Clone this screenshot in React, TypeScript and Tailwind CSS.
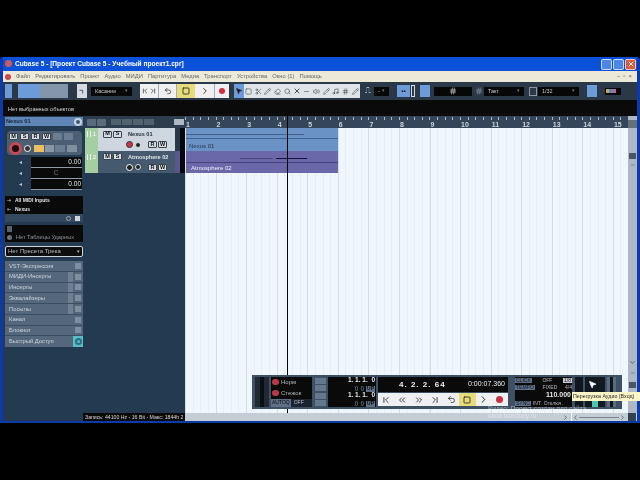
import React from 'react';
import { ChevronDown, ChevronFirst, ChevronLast, ChevronLeft, ChevronRight, ChevronsLeft, ChevronsRight, Square, MousePointer2, Search, X, Pencil, Scissors, Eraser, Volume2, Hash, Minus, Music, Undo2 } from 'lucide-react';

const menu = ['Файл', 'Редактировать', 'Проект', 'Аудио', 'МИДИ', 'Партитура', 'Медиа', 'Транспорт', 'Устройства', 'Окно (1)', 'Помощь'];
const sections = ['VST-Экспрессия', 'МИДИ-Инсерты', 'Инсерты', 'Эквалайзеры', 'Посылы', 'Канал', 'Блокнот'];
const bars = Array.from({ length: 15 }, (_, i) => i + 1);

const Mini: React.FC<{ label?: string; className?: string }> = ({ label, className = 'border border-[#39434e] bg-[#d6dce2] text-[#111]' }) => (
  <span className={`flex h-[7px] w-[9px] items-center justify-center rounded-[1px] text-[5.5px] font-bold leading-none ${className}`}>{label}</span>
);

const Drop: React.FC<{ width: string; text?: string }> = ({ width, text }) => (
  <div className={`flex h-[9px] items-center justify-between bg-[#070707] px-[4px] text-[5.5px] text-[#c8c8c8] ${width}`}>
    <span>{text}</span>
    <span className="text-[5px] text-[#777]">▾</span>
  </div>
);

const TrackRow: React.FC<{ n: number; name: string; selected?: boolean }> = ({ n, name, selected }) => (
  <div className="flex h-[22.5px]">
    <div className="flex w-[13px] justify-between bg-[#a5cfa3] px-[2px] pt-[2px] text-[6px] text-white">
      <span className="mt-[1px] h-[6px] w-[4px] border-x border-white/80" />
      <span>{n}</span>
    </div>
    <div className={`flex w-[77px] flex-col gap-[3px] pl-[5px] pt-[2px] ${selected ? 'bg-[#ced7e0]' : 'bg-[#45596f]'}`}>
      <div className="flex items-center gap-[1px]">
        <Mini label="M" />
        <Mini label="S" />
        <span className={`ml-[5px] truncate text-[5.6px] font-bold ${selected ? 'text-[#24303c]' : 'text-[#dfe4e9]'}`}>{name}</span>
      </div>
      <div className="flex items-center pl-[23px]">
        <span className={`h-[7px] w-[7px] rounded-full border ${selected ? 'border-[#333] bg-[#c8383e]' : 'border-white bg-[#222]'}`} />
        <span className="ml-[2px] h-[6px] w-[6px] rounded-full border border-[#ddd] bg-[#222]" />
        <span className="ml-[7px] flex gap-[1px]">
          <Mini label="R" />
          <Mini label="W" />
        </span>
      </div>
    </div>
    <div className={`w-[5px] ${selected ? 'bg-[#26384c]' : 'bg-[#5a5690]'}`} />
    <div className="w-[5px] bg-[#08080c]" />
  </div>
);

const Value: React.FC<{ text: string; center?: boolean }> = ({ text, center }) => (
  <div className="flex h-[11px] items-center">
    <span className="w-[26px] pl-[14px] text-[6px] text-[#b8c4d0]">◂</span>
    <div className={`flex h-full flex-1 items-center border-b border-[#8d9aa8] bg-[#0a0a0a] pr-[1px] text-[6.5px] ${center ? 'justify-center text-[#777]' : 'justify-end text-[#e8e8e8]'}`}>{text}</div>
  </div>
);

const Inspector: React.FC = () => (
  <div className="mr-[2px] flex w-[78px] flex-col pt-[1px]">
    <div className="flex h-[9px] items-center justify-between bg-[#5f86b6] pl-[1px] pr-[1px] text-[5.6px] font-bold text-[#16263a]">
      <span>Nexus 01</span>
      <span className="h-[8px] w-[8px] rounded-full border-2 border-[#c7d2dc] bg-[#42586e]" />
    </div>
    <div className="mt-[5px] ml-[2px] mr-[1px] h-[24px] rounded-[4px] bg-[#4b5e73] p-[2px]">
      <div className="flex gap-[2px]">
        <Mini label="M" />
        <Mini label="S" />
        <Mini label="R" />
        <Mini label="W" />
        <Mini className="bg-[#6b7d90]" />
        <Mini className="bg-[#6b7d90]" />
      </div>
      <div className="mt-[2px] flex items-center">
        <span className="h-[13px] w-[13px] rounded-full border-[3px] border-[#c94a50] bg-[#1a1012]" />
        <span className="ml-[2px] h-[7px] w-[7px] rounded-full border border-white bg-[#333]" />
        <span className="ml-[3px] h-[7px] w-[10px] bg-[#e8c060]" />
        <span className="ml-[1px] h-[7px] w-[9px] bg-[#8a98a6]" />
        <span className="ml-[1px] h-[7px] w-[10px] bg-[#6b7d90]" />
        <span className="ml-[2px] h-[7px] w-[10px] bg-[#7f8f9f]" />
      </div>
    </div>
    <div className="mt-[2px] pr-[1px]">
      <Value text="0.00" />
      <Value text="C" center />
      <Value text="0.00" />
    </div>
    <div className="mt-[6px] flex h-[9px] items-center gap-[4px] bg-[#0a0a0a] px-[2px] text-[5px] font-bold text-[#e0e0e0]">
      <span className="text-[#7d8a98]">⇥</span>
      <span>All MIDI Inputs</span>
    </div>
    <div className="flex h-[9px] items-center gap-[4px] bg-[#0a0a0a] px-[2px] text-[5px] font-bold text-[#e0e0e0]">
      <span className="text-[#7d8a98]">⇤</span>
      <span>Nexus</span>
    </div>
    <div className="flex h-[8px] items-center justify-end gap-[4px] bg-[#34485e] pr-[3px]">
      <span className="h-[5px] w-[5px] rounded-full border border-[#9aa6b2]" />
      <span className="h-[5px] w-[5px] bg-[#d0d6dc]" />
    </div>
    <div className="mt-[3px] h-[8px] bg-[#0a0a0a] px-[2px]">
      <span className="mt-[1px] block h-[6px] w-[5px] bg-[#56626e]" />
    </div>
    <div className="flex h-[9px] items-center gap-[4px] bg-[#0a0a0a] px-[2px] text-[5.6px] text-[#8d959d]">
      <span className="h-[5px] w-[5px] rounded-full bg-[#6a747e]" />
      <span>Нет Таблицы Ударных</span>
    </div>
    <div className="mt-[4px] flex h-[11px] items-center justify-between rounded-[2px] border border-[#cfd6dc] bg-[#0e0e0e] px-[2px] text-[6px] text-[#b8bec4]">
      <span>Нет Пресета Трека</span>
      <span className="text-[5px]">▾</span>
    </div>
    <div className="mt-[4px] flex flex-col">
      {sections.map((s, i) => (
        <div key={s} className="flex h-[10.75px] items-center justify-between border-b border-[#3b4f64] bg-[#55677d] pl-[4px] pr-[2px] text-[5.8px] text-[#ccd4db]">
          <span>{s}</span>
          <span className="flex h-full items-center gap-[2px]">
            {i > 0 && i < 5 && <span className="h-full w-[5px] bg-[#6f8093]" />}
            <span className="h-[6px] w-[6px] bg-[#7f8f9f]" />
          </span>
        </div>
      ))}
      <div className="flex h-[10.75px] items-center justify-between bg-[#55677d] pl-[4px] text-[5.8px] text-[#ccd4db]">
        <span>Быстрый Доступ</span>
        <span className="flex h-full w-[10px] items-center justify-center bg-[#58c0c4]">
          <span className="h-[7px] w-[7px] rounded-full border-2 border-[#2a6f88]" />
        </span>
      </div>
    </div>
  </div>
);

const Tool: React.FC<{ on?: boolean; children?: React.ReactNode }> = ({ on, children }) => (
  <span className={`flex h-[14px] w-[9.7px] items-center justify-center text-[#4a4f55] ${on ? 'bg-[#6d9ad8]' : 'bg-[#dfe4e9]'}`}>{children}</span>
);

const Toolbar: React.FC = () => (
  <div className="flex h-[18px] items-center bg-[#2b3848] pl-[2px]">
    <span className="h-[14px] w-[7px] bg-[#6d9ad8]" />
    <div className="ml-[6px] flex">
      <span className="h-[14px] w-[22px] bg-[#6d9ad8]" />
      <span className="h-[14px] w-[28px] bg-[#8496aa]" />
    </div>
    <span className="ml-[9px] flex h-[14px] w-[10px] items-center justify-center bg-[#d5dbe1] text-[#222]"><ChevronRight size={8} className="-rotate-45" /></span>
    <Drop width="ml-[4px] w-[41px]" text="Касание" />
    <div className="ml-[8px] flex h-[14px] w-[89px] items-stretch bg-[#eef0f2] text-[#222]">
      <span className="flex w-[18px] items-center justify-center"><ChevronFirst size={8} /><ChevronLast size={8} /></span>
      <span className="flex w-[19px] items-center justify-center border-x border-[#aab]"><Undo2 size={8} /></span>
      <span className="flex w-[18px] items-center justify-center bg-[#e8dc7a]"><Square size={8} strokeWidth={2.5} /></span>
      <span className="flex w-[19px] items-center justify-center"><ChevronRight size={10} /></span>
      <span className="flex w-[15px] items-center justify-center border-l border-[#aab]"><span className="h-[6px] w-[6px] rounded-full bg-[#d23040]" /></span>
    </div>
    <div className="ml-[5px] flex">
      <Tool on><MousePointer2 size={8} fill="#111" /></Tool>
      <Tool><Square size={7} /></Tool>
      <Tool><Scissors size={7} /></Tool>
      <Tool><Pencil size={7} /></Tool>
      <Tool><Eraser size={7} /></Tool>
      <Tool><Search size={7} /></Tool>
      <Tool><X size={8} strokeWidth={3} /></Tool>
      <Tool><Minus size={7} /></Tool>
      <Tool><Volume2 size={7} /></Tool>
      <Tool><Pencil size={7} /></Tool>
      <Tool><Music size={7} /></Tool>
      <Tool><Hash size={7} /></Tool>
      <Tool><Pencil size={7} /></Tool>
    </div>
    <span className="ml-[5px] w-[8px] text-[8px] leading-none text-[#aab6c2]">⎍</span>
    <Drop width="ml-[1px] w-[15px]" text="-" />
    <span className="ml-[8px] flex h-[12px] w-[13px] items-center justify-center bg-[#6d9ad8] text-[6px] text-[#111]">▪▪</span>
    <span className="ml-[1px] h-[12px] w-[4px] border border-[#d5dbe1]" />
    <span className="ml-[5px] h-[12px] w-[10px] bg-[#6d9ad8]" />
    <div className="ml-[4px] flex h-[9px] w-[38px] items-center justify-center bg-[#070707] text-[#e0e0e0]"><Hash size={8} /></div>
    <span className="ml-[3px] text-[#8996a4]"><Hash size={8} /></span>
    <Drop width="ml-[1px] w-[40px]" text="Такт" />
    <span className="ml-[5px] h-[9px] w-[8px] border border-[#8996a4]" />
    <Drop width="ml-[1px] w-[41px]" text="1/32" />
    <span className="ml-[8px] h-[12px] w-[10px] bg-[#6d9ad8]" />
    <div className="ml-[8px] flex h-[7px] w-[16px] items-center bg-[#070707] px-[1px]">
      <span className="h-[4px] w-[10px] bg-[linear-gradient(90deg,#d9a23c_0_33%,#4f8fd0_33%_66%,#c85c8a_66%)]" />
    </div>
  </div>
);

const Ruler: React.FC = () => (
  <div className="relative flex h-[12px] bg-[#35465a] pl-[1px]">
    <div className="absolute inset-x-0 top-[1px] h-[3px] bg-[repeating-linear-gradient(90deg,#aeb8c2_0_1px,transparent_1px_7.64px)]" />
    {bars.map((b) => (
      <span key={b} className="w-[30.57px] shrink-0 pt-[4px] text-[7px] font-bold leading-[9px] text-[#ccd4dc]">{b}</span>
    ))}
  </div>
);

const Lcd: React.FC = () => (
  <div className="flex h-[15px] flex-col justify-between bg-[#0a0a0a] pr-[1px] text-[6.5px] font-bold leading-none text-[#e8e8e8]">
    <div className="text-right">1. 1. 1.&nbsp;&nbsp;0</div>
    <div className="flex justify-end gap-[2px] text-[#56616c]">
      <span>0</span>
      <span>0</span>
      <span className="bg-[#5d7087] px-[1px] text-[5px] text-[#0a0a0a]">UP</span>
    </div>
  </div>
);

const Transport: React.FC = () => (
  <div className="absolute left-[252px] top-[375px] flex h-[34px] w-[370px] gap-[2px] bg-[#3e5064] px-[3px] py-[2px]">
    <div className="flex w-[14px] justify-center gap-[1px] bg-[#1f2a36]">
      <span className="h-full w-[4px] bg-[#0b0f14]" />
    </div>
    <div className="flex w-[41px] flex-col gap-[1px] bg-[#0a0a0a] text-[6px] text-[#b4bac0]">
      <div className="flex h-[10px] items-center gap-[2px] px-[1px]"><span className="h-[6px] w-[7px] rounded-full bg-[#b83a44]" />Норм</div>
      <div className="flex h-[10px] items-center gap-[2px] px-[1px]"><span className="h-[6px] w-[7px] rounded-full bg-[#b83a44]" />Стежок</div>
      <div className="flex h-[8px] items-center gap-[3px] bg-[#1a2530] text-[5px]"><span className="bg-[#5d7087] px-[1px] text-[#0a0a0a]">AUTOQ</span>OFF</div>
    </div>
    <div className="ml-[1px] flex w-[11px] flex-col justify-between py-[1px]">
      <span className="h-[6px] bg-[#64778c]" />
      <span className="h-[6px] bg-[#64778c]" />
      <span className="h-[6px] bg-[#64778c]" />
      <span className="h-[6px] bg-[#64778c]" />
    </div>
    <div className="flex w-[48px] flex-col justify-between">
      <Lcd />
      <Lcd />
    </div>
    <div className="flex w-[130px] flex-col">
      <div className="flex h-[15px] items-center justify-between bg-[#0a0a0a] pl-[21px] pr-[3px] text-[8px] font-bold text-[#eceff2]">
        <span className="tracking-[1px]">4. 2. 2. 64</span>
        <span className="text-[7px] font-normal">0:00:07.360</span>
      </div>
      <div className="mt-[1px] flex h-[13px] bg-[#eef0f2] text-[#222]">
        <span className="flex flex-1 items-center justify-center"><ChevronFirst size={10} /></span>
        <span className="flex flex-1 items-center justify-center"><ChevronsLeft size={10} /></span>
        <span className="flex flex-1 items-center justify-center"><ChevronsRight size={10} /></span>
        <span className="flex flex-1 items-center justify-center"><ChevronLast size={10} /></span>
        <span className="flex flex-1 items-center justify-center"><Undo2 size={9} /></span>
        <span className="flex flex-1 items-center justify-center bg-[#e8dc7a]"><Square size={8} strokeWidth={2.5} /></span>
        <span className="flex flex-1 items-center justify-center"><ChevronRight size={11} /></span>
        <span className="flex flex-1 items-center justify-center"><span className="h-[7px] w-[7px] rounded-full bg-[#c93040]" /></span>
      </div>
    </div>
    <div className="ml-[5px] flex w-[57px] flex-col bg-[#0a0a0a] text-[5px] leading-none text-[#b4bac0]">
      <div className="flex h-[7px] items-center justify-between">
        <span className="bg-[#5d7087] px-[1px] text-[#10161c]">CLICK</span>
        <span>OFF</span>
        <span className="bg-[#c8ced4] px-[1px] text-[#111]">1/8</span>
      </div>
      <div className="flex h-[7px] items-center justify-between">
        <span className="bg-[#5d7087] px-[1px] text-[#10161c]">TEMPO</span>
        <span>FIXED</span>
        <span>4/4</span>
      </div>
      <div className="h-[8px] pr-[1px] text-right text-[7px] font-bold text-[#e8e8e8]">110.000</div>
      <div className="flex h-[8px] items-center gap-[2px]">
        <span className="bg-[#5d7087] px-[1px] text-[#10161c]">SYNC</span>
        <span>INT.</span>
        <span>Отключ.</span>
      </div>
    </div>
    <div className="ml-[1px] w-[8px] bg-[#10161c]" />
    <div className="flex w-[20px] flex-col justify-end bg-[#11181f]">
      <span className="mx-auto h-[6px] w-[6px] bg-[#48c9b0]" />
    </div>
    <div className="flex w-[9px] justify-center bg-[#5b6c80]">
      <span className="h-full w-[3px] bg-[#10161c]" />
    </div>
  </div>
);

const App: React.FC = () => {
  return (
    <div className="relative h-[480px] w-[640px] overflow-hidden bg-black pt-[57px] font-['Liberation_Sans',sans-serif] blur-[0.4px]">
      <div className="flex h-[366px] flex-col rounded-t-[3px] bg-[#0c3aa8] px-[3px] pb-[2px]">
        <div className="flex h-[14px] items-center justify-between bg-[#0a50d8] pr-[1px] text-[6.6px] font-bold text-white">
          <span className="flex items-center gap-[3px] pl-[2px]">
            <span className="h-[7px] w-[7px] rounded-full bg-[#d05a5a]" />
            Cubase 5 - [Проект Cubase 5 - Учебный проект1.cpr]
          </span>
          <span className="flex gap-[1px]">
            <span className="h-[11px] w-[11px] rounded-[2px] border border-white/70 bg-[#4c86e8]" />
            <span className="h-[11px] w-[11px] rounded-[2px] border border-white/70 bg-[#4c86e8]" />
            <span className="flex h-[11px] w-[11px] items-center justify-center rounded-[2px] border border-white/70 bg-[#d8583a]"><X size={8} strokeWidth={3} /></span>
          </span>
        </div>
        <div className="flex h-[11px] items-center justify-between bg-[#ece9d8] pr-[2px] text-[#666]">
          <div className="flex items-center gap-[5px] pl-[2px] text-[5.8px]">
            <span className="h-[6px] w-[6px] rounded-full bg-[#c84a4a]" />
            {menu.map((m) => <span key={m}>{m}</span>)}
          </div>
          <span className="text-[6px] tracking-[3px]">–▫×</span>
        </div>
        <Toolbar />
        <div className="flex h-[16px] items-start bg-[#0a0a0a] pl-[5px] pt-[5px] text-[5.6px] leading-[8px] text-[#d8d8d8]">Нет выбранных объектов</div>
        <div className="flex min-h-0 flex-1 bg-[#233a50]">
          <div className="flex w-[182px] flex-col pl-[2px]">
            <div className="flex flex-1">
              <Inspector />
              <div className="flex w-[100px] flex-col">
                <div className="flex h-[12px] items-center gap-[1px] bg-[#2e3d4e] pl-[2px]">
                  <Mini className="bg-[#5a6b7d]" />
                  <Mini className="bg-[#5a6b7d]" />
                  <span className="ml-[4px] h-[6px] w-[10px] bg-[#51626f]" />
                  <span className="h-[6px] w-[10px] bg-[#51626f]" />
                  <span className="h-[6px] w-[10px] bg-[#51626f]" />
                  <span className="h-[6px] w-[10px] bg-[#51626f]" />
                  <span className="ml-[19px] h-[6px] w-[10px] bg-[#aeb8c2]" />
                </div>
                <TrackRow n={1} name="Nexus 01" selected />
                <TrackRow n={2} name="Atmosphere 02" />
              </div>
            </div>
            <div className="flex h-[8px] justify-end">
              <span className="w-[102px] overflow-hidden whitespace-nowrap bg-[#0a0a0a] pl-[2px] text-[5.2px] leading-[8px] text-[#d8d8d8]">Запись: 44100 Hz - 16 Bit - Макс: 1844h 2</span>
            </div>
          </div>
          <div className="flex min-w-0 flex-1 flex-col">
            <div className="flex flex-1 overflow-hidden">
              <div className="flex min-w-0 flex-1 flex-col">
                <Ruler />
                <div className="flex-1 bg-[#f0f6fd] bg-[repeating-linear-gradient(90deg,#d6dce3_0_1px,transparent_1px_30.57px),repeating-linear-gradient(90deg,#e6edf5_0_1px,transparent_1px_7.64px)]">
                  <div className="ml-[1px] flex h-[22.5px] w-[152px] flex-col justify-between bg-[#6a92c4] pt-[6px] text-[6px] text-[#24384f]">
                    <div className="h-px w-[118px] bg-[#3f5f8c]" />
                    <div className="h-px bg-[#3f5f8c]" />
                    <div className="pb-px pl-[3px] leading-[7px]">Nexus 01</div>
                  </div>
                  <div className="ml-[1px] flex h-[22.5px] w-[152px] flex-col justify-between bg-[#6b68aa] pt-[7px] text-[6px] text-[#eef]">
                    <div className="ml-[54px] flex gap-[3px]">
                      <span className="h-[1.5px] w-[33px] bg-[#4a4780]" />
                      <span className="h-[1.5px] w-[31px] bg-[#14123c]" />
                    </div>
                    <div className="h-px bg-[#45437e]" />
                    <div className="pb-px pl-[5px] leading-[7px]">Atmosphere 02</div>
                  </div>
                </div>
              </div>
              <div className="flex w-[9px] shrink-0 flex-col items-center bg-[#aeb8c4]">
                <span className="mt-[4px] h-[8px] w-full bg-[#66707c]" />
                <span className="mt-[25px] h-[6px] w-[7px] bg-[#4c5662]" />
                <Minus size={6} className="mt-[3px] text-[#4c5662]" />
                <ChevronDown size={7} className="mt-auto text-[#222]" />
                <Minus size={6} className="mt-[4px] text-[#4c5662]" />
                <span className="mb-[25px] mt-[6px] h-[6px] w-[7px] bg-[#4c5662]" />
              </div>
            </div>
            <div className="flex h-[8px] items-center justify-end bg-[#c4ccd4] pr-[1px] text-[#2c343c]">
              <ChevronRight size={7} />
              <span className="ml-[2px] h-full w-px bg-white" />
              <ChevronLeft size={7} />
              <span className="relative h-px w-[40px] bg-[#79838e]" />
              <ChevronRight size={7} />
              <span className="ml-[2px] h-[8px] w-[8px] bg-[#32414f]" />
            </div>
          </div>
        </div>
      </div>
      <div className="absolute left-[287px] top-[116px] h-[297px] w-px bg-black" />
      <Transport />
      <div className="absolute left-[488px] top-[405px] text-[6.5px] leading-[7px] text-white/50">
        <div>Видео: Проект создан для сайта</div>
        <div>www.mixstudy.ru</div>
      </div>
      <div className="absolute left-[572px] top-[392px] h-[9px] w-[68px] bg-[#fbf6c9] pl-[1px] text-[5.3px] leading-[9px] whitespace-nowrap text-[#222]">Перегрузка Аудио (Вход)</div>
      <div className="absolute left-[588px] top-[380px] text-white"><MousePointer2 size={9} fill="white" /></div>
    </div>
  );
};

export default App;
